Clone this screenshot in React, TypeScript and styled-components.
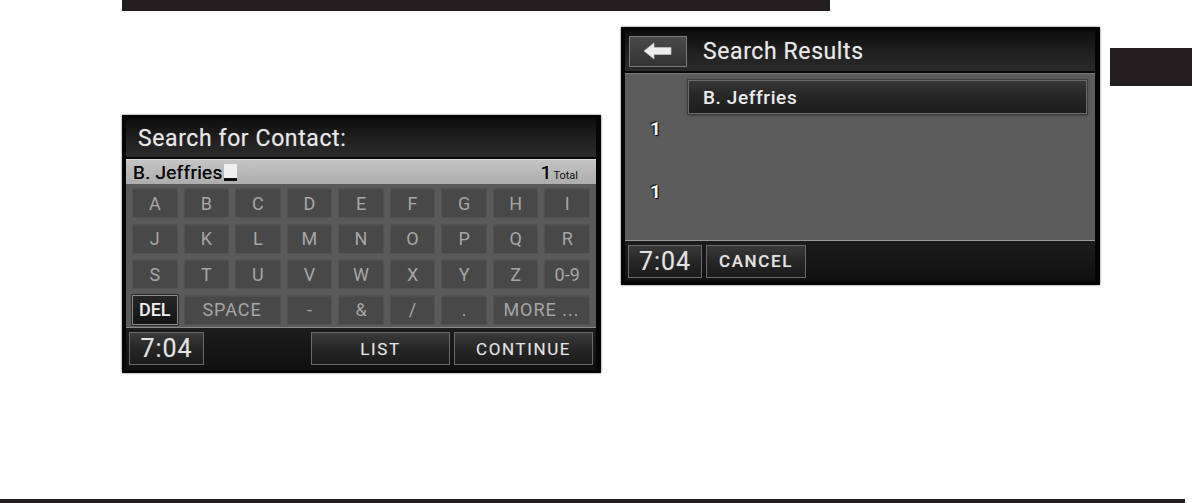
import styled, { createGlobalStyle } from "styled-components";

const INK = "#231f20";

// keyboard rows as they are laid out on the head unit
const KEY_ROWS: { label: string; span?: number; active?: boolean }[][] = [
  "ABCDEFGHI".split("").map((l) => ({ label: l })),
  "JKLMNOPQR".split("").map((l) => ({ label: l })),
  [..."STUVWXYZ".split("").map((l) => ({ label: l })), { label: "0-9" }],
  [
    { label: "DEL", active: true },
    { label: "SPACE", span: 2 },
    { label: "-" },
    { label: "&" },
    { label: "/" },
    { label: "." },
    { label: "MORE ...", span: 2 },
  ],
];

const GlobalStyle = createGlobalStyle`
  html, body {
    margin: 0;
    padding: 0;
    background: #ffffff;
  }
  body {
    font-family: Roboto, "Liberation Sans", Arial, sans-serif;
  }
`;

const Page = styled.div`
  width: 1192px;
  height: 503px;
  display: flex;
  flex-direction: column;
  overflow: hidden;
`;

const TopBar = styled.div`
  margin-left: 122px;
  width: 708px;
  height: 11px;
  background: ${INK};
`;

const Content = styled.div`
  display: flex;
  align-items: flex-start;
  padding-left: 122px;
`;

const Screen = styled.div<{ $top: number; $left?: number }>`
  box-sizing: border-box;
  width: 479px;
  height: 258px;
  margin-top: ${(p) => p.$top}px;
  margin-left: ${(p) => p.$left ?? 0}px;
  border: 4px solid #050505;
  border-right-width: 5px;
  background: #050505;
  display: flex;
  flex-direction: column;
  box-shadow: 0 0 2px rgba(0, 0, 0, 0.6);
`;

const Header = styled.div<{ $height: number }>`
  height: ${(p) => p.$height}px;
  flex: none;
  display: flex;
  align-items: center;
  gap: 16px;
  padding: 0 4px 0 12px;
  background: linear-gradient(#0e0e0e, #202020 55%, #2b2b2b);
  border-bottom: 2px solid #080808;
`;

const Title = styled.h1`
  margin: 0;
  font-size: 23px;
  font-weight: 400;
  letter-spacing: 0.6px;
  color: #e8e8e8;
  text-shadow: 0 0 1px rgba(255, 255, 255, 0.4);
`;

const InputBar = styled.div`
  height: 24px;
  flex: none;
  display: flex;
  align-items: center;
  padding: 0 18px 0 7px;
  background: linear-gradient(#c4c4c4, #adadad);
  border-top: 1px solid #d8d8d8;
  color: #0a0a0a;
`;

const Typed = styled.span`
  font-size: 19px;
  letter-spacing: 0.3px;
  line-height: 1;
  text-shadow: 0 0 0.6px #000;
`;

const Cursor = styled.span`
  display: inline-block;
  width: 13px;
  height: 14px;
  background: #efefef;
  border-bottom: 3px solid #0a0a0a;
  margin-left: 1px;
  vertical-align: -3px;
`;

const Count = styled.span`
  margin-left: auto;
  font-size: 19px;
  line-height: 1;
  text-shadow: 0 0 0.6px #000;
`;

const CountLabel = styled.span`
  font-size: 11px;
  margin-left: 2px;
  text-shadow: none;
`;

const Keyboard = styled.div`
  flex: 1;
  display: grid;
  grid-template-columns: repeat(9, 1fr);
  grid-auto-rows: 30px;
  gap: 5.5px 6px;
  padding: 4px 6px 2px;
  background: #5a5a5a;
  border-bottom: 1px solid #8a8a8a;
`;

const Key = styled.div<{ $span?: number; $active?: boolean }>`
  grid-column: span ${(p) => p.$span ?? 1};
  display: flex;
  align-items: center;
  justify-content: center;
  font-size: 18px;
  font-weight: ${(p) => (p.$active ? 500 : 400)};
  letter-spacing: ${(p) => (p.$span ? "1px" : "0")};
  color: ${(p) => (p.$active ? "#f0f0f0" : "#a6a6a6")};
  background: ${(p) =>
    p.$active ? "linear-gradient(#262626, #141414)" : "#484848"};
  border: 1px solid ${(p) => (p.$active ? "#8c8c8c" : "#525252")};
  border-radius: 1px;
  box-shadow: ${(p) =>
    p.$active ? "0 0 0 1px #2a2a2a" : "inset 0 1px 0 #4f4f4f"};
`;

const BottomBar = styled.div<{ $height: number }>`
  height: ${(p) => p.$height}px;
  flex: none;
  display: flex;
  align-items: center;
  gap: 4px;
  padding: 0 3px;
  background: linear-gradient(#1c1c1c, #101010);
`;

const Spacer = styled.div`
  flex: 1;
`;

const Button = styled.div<{ $width: number; $big?: boolean; $bold?: boolean }>`
  box-sizing: border-box;
  width: ${(p) => p.$width}px;
  height: 33px;
  display: flex;
  align-items: center;
  justify-content: center;
  background: linear-gradient(#3a3a3a, #262626 50%, #1b1b1b);
  border: 1px solid #6a6a6a;
  color: #e2e2e2;
  font-size: ${(p) => (p.$big ? "25px" : "17px")};
  font-weight: ${(p) => (p.$bold ? 500 : 400)};
  letter-spacing: ${(p) => (p.$big ? "1px" : "1.6px")};
  text-shadow: 0 0 1px rgba(255, 255, 255, 0.3);
`;

const BackButton = styled.div`
  box-sizing: border-box;
  width: 58px;
  height: 31px;
  margin-left: -8px;
  display: flex;
  align-items: center;
  justify-content: center;
  background: linear-gradient(#4a4a4a, #333);
  border: 1px solid #7a7a7a;
`;

const Results = styled.div`
  flex: 1;
  display: grid;
  grid-template-columns: 63px 1fr;
  background: #5c5c5c;
  border-top: 1px solid #777;
  border-bottom: 1px solid #9a9a9a;
`;

const Markers = styled.div`
  display: flex;
  flex-direction: column;
  align-items: center;
  gap: 42px;
  padding: 44px 0 0 0;
  margin-left: -2px;
`;

const Marker = styled.span`
  font-size: 19px;
  font-weight: 700;
  color: #f4f4f4;
  line-height: 21px;
  text-shadow: 0 0 1px #000, 1px 1px 1px #000, -1px -1px 1px #111;
`;

const ResultList = styled.div`
  padding: 6px 8px 0 0;
`;

const ResultRow = styled.div`
  box-sizing: border-box;
  height: 34px;
  display: flex;
  align-items: center;
  padding-left: 14px;
  background: linear-gradient(#383838, #262626 45%, #1d1d1d);
  border: 1px solid #6b6b6b;
  box-shadow: 0 0 0 1px #3c3c3c, 0 1px 3px rgba(0, 0, 0, 0.5);
  color: #ececec;
  font-size: 19px;
  font-weight: 500;
  letter-spacing: 0.6px;
`;

const Tab = styled.div`
  width: 82px;
  height: 38px;
  margin-left: 10px;
  margin-top: 37px;
  background: ${INK};
`;

const Rule = styled.div`
  margin-top: auto;
  width: 1185px;
  height: 4px;
  background: ${INK};
`;

const BackArrow = () => (
  <svg width="30" height="18" viewBox="0 0 30 18">
    <polygon
      points="1,9 11,1 11,5.5 28,5.5 28,12.5 11,12.5 11,17"
      fill="#eeeeee"
      stroke="#bdbdbd"
      strokeWidth="0.8"
      strokeLinejoin="round"
    />
  </svg>
);

export default function App() {
  return (
    <>
      <GlobalStyle />
      <Page>
        <TopBar />
        <Content>
          <Screen $top={104}>
            <Header $height={38}>
              <Title>Search for Contact:</Title>
            </Header>
            <InputBar>
              <Typed>B. Jeffries</Typed>
              <Cursor />
              <Count>
                1<CountLabel>Total</CountLabel>
              </Count>
            </InputBar>
            <Keyboard>
              {KEY_ROWS.flat().map((k, i) => (
                <Key key={i} $span={k.span} $active={k.active}>
                  {k.label}
                </Key>
              ))}
            </Keyboard>
            <BottomBar $height={42}>
              <Button $width={75} $big>
                7:04
              </Button>
              <Spacer />
              <Button $width={139}>LIST</Button>
              <Button $width={139}>CONTINUE</Button>
            </BottomBar>
          </Screen>

          <Screen $top={16} $left={20}>
            <Header $height={40}>
              <BackButton>
                <BackArrow />
              </BackButton>
              <Title>Search Results</Title>
            </Header>
            <Results>
              <Markers>
                <Marker>1</Marker>
                <Marker>1</Marker>
              </Markers>
              <ResultList>
                <ResultRow>B. Jeffries</ResultRow>
              </ResultList>
            </Results>
            <BottomBar $height={40}>
              <Button $width={74} $big>
                7:04
              </Button>
              <Button $width={100} $bold>
                CANCEL
              </Button>
            </BottomBar>
          </Screen>

          <Tab />
        </Content>
        <Rule />
      </Page>
    </>
  );
}
